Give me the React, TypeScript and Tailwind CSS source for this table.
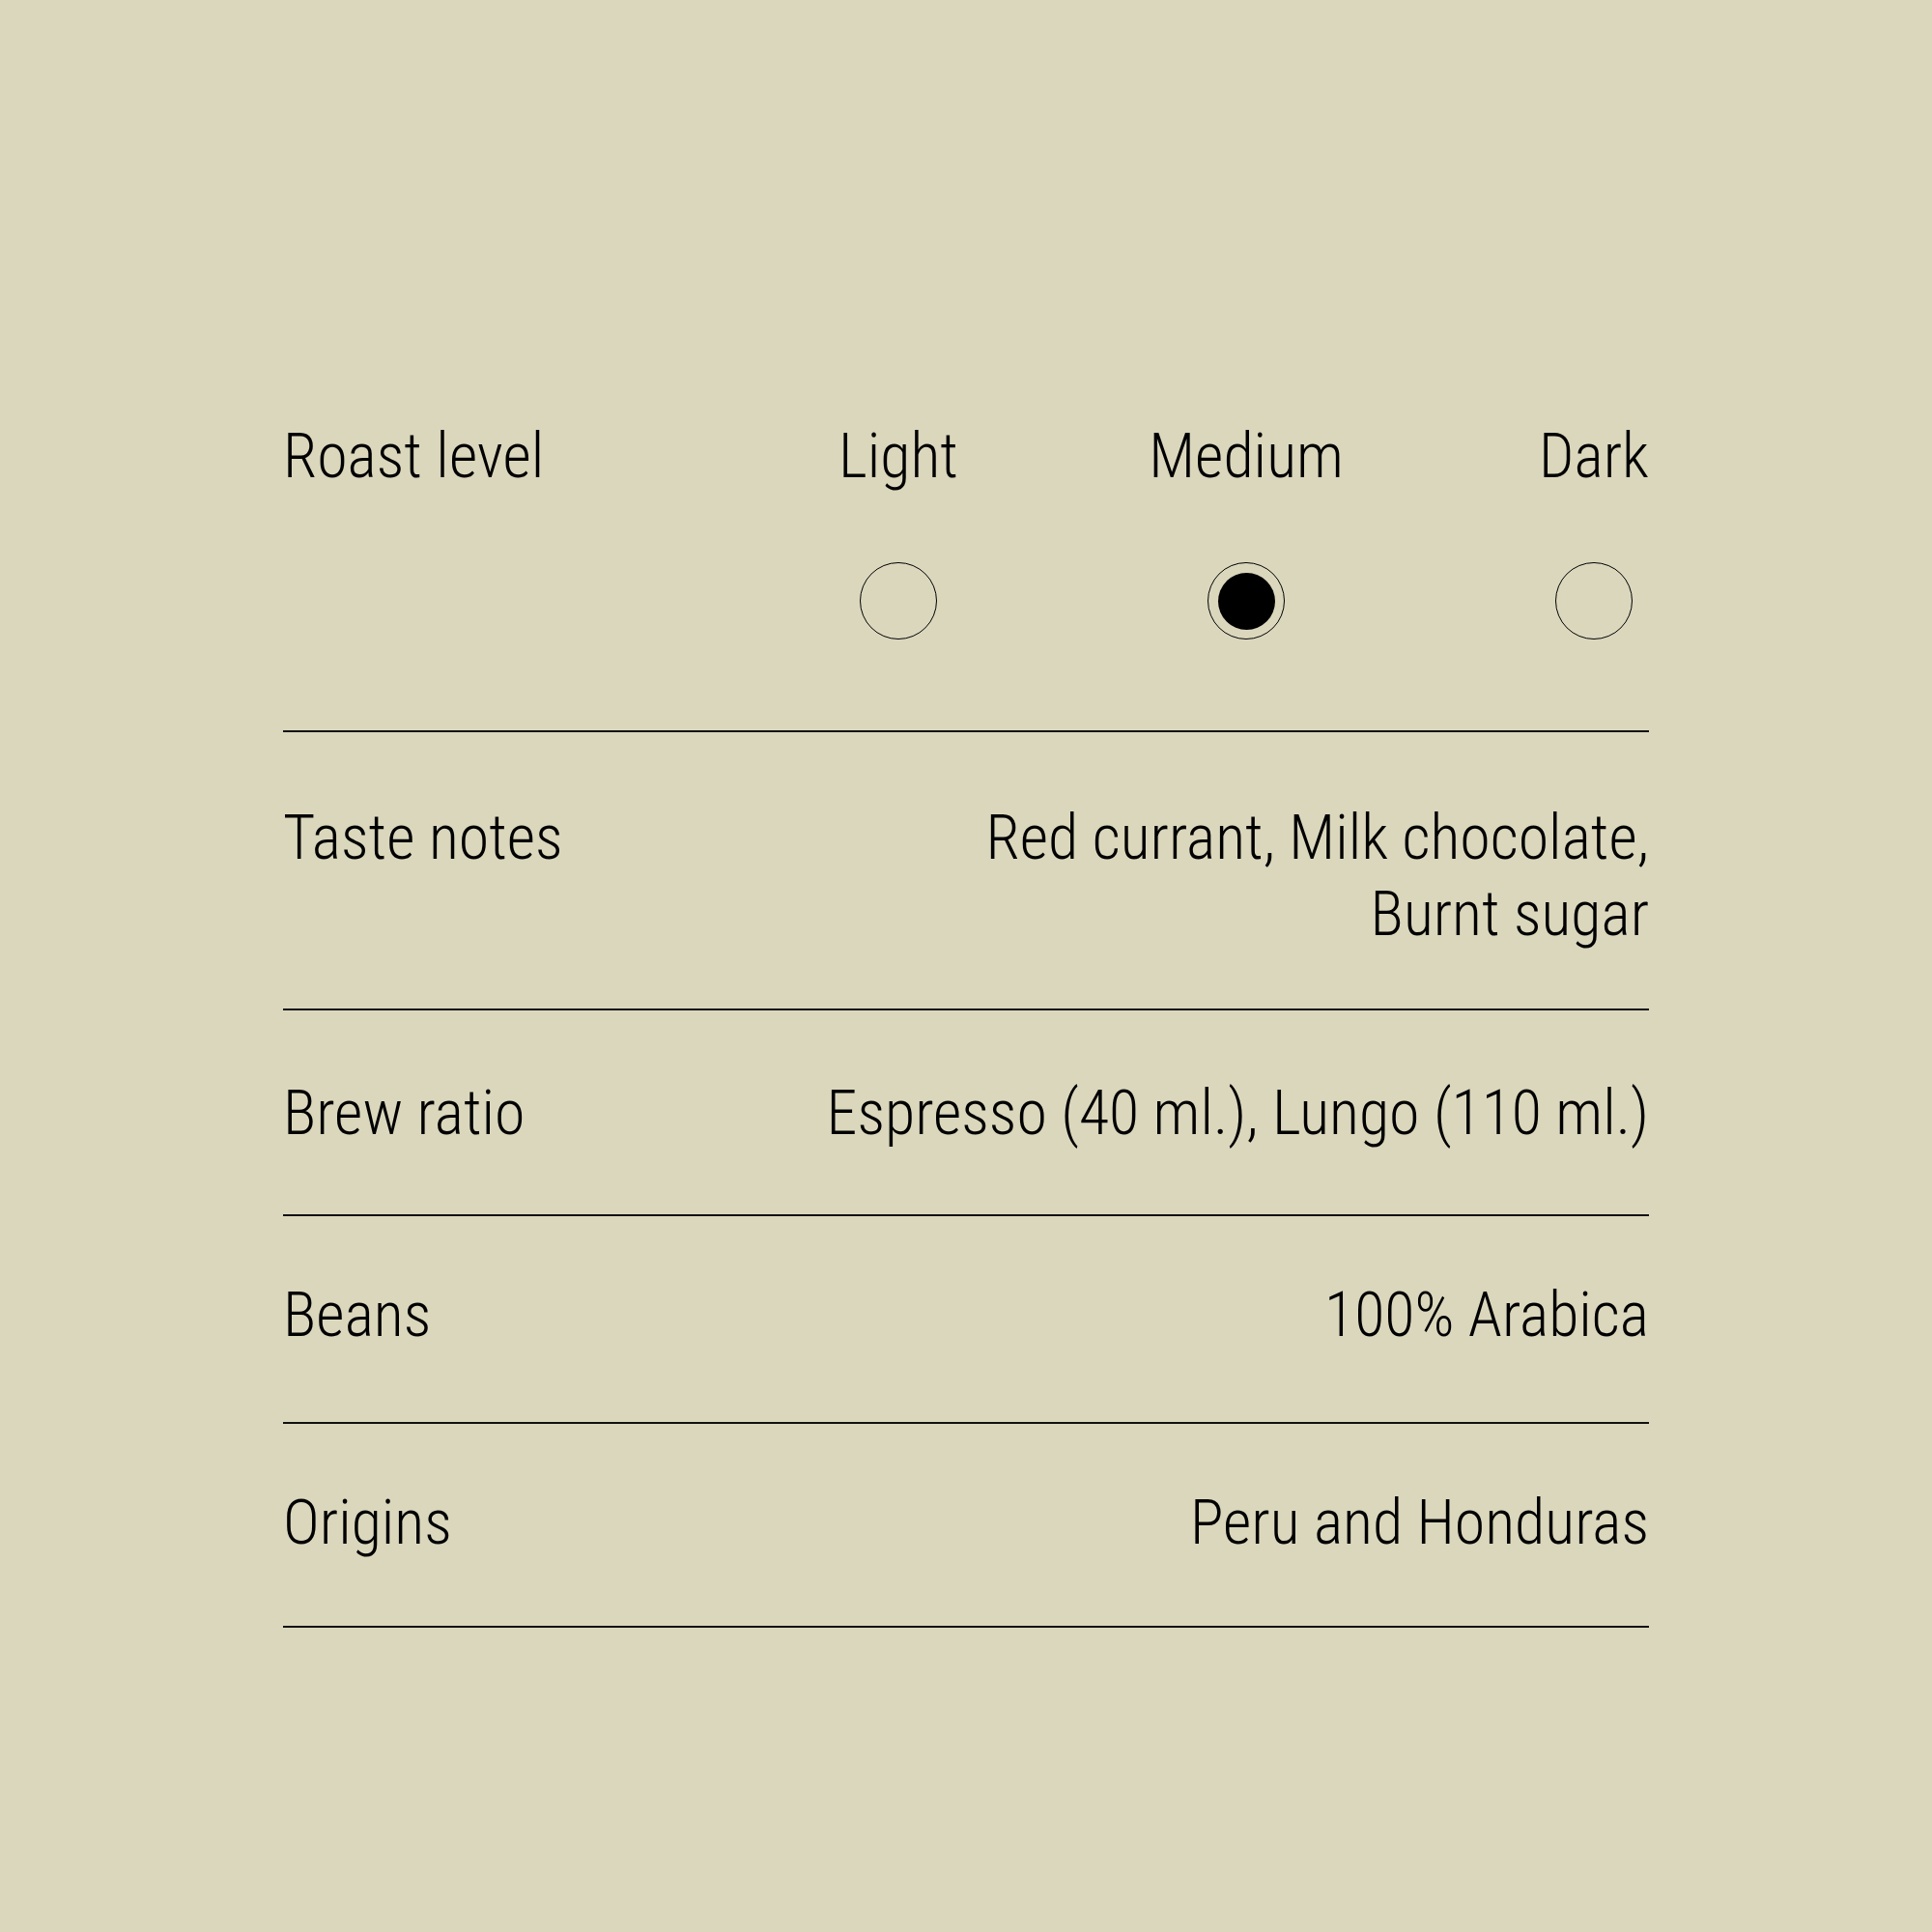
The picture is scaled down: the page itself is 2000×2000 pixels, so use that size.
const font = { fontFamily: '"Roboto Condensed", "Open Sans", sans-serif' };

const levels = [
  { name: 'Light', selected: false },
  { name: 'Medium', selected: true },
  { name: 'Dark', selected: false },
];

function Radio({ selected }: { selected: boolean }) {
  return (
    <div className="mt-[70px] flex h-[80px] w-[80px] shrink-0 items-center justify-center rounded-full border border-black">
      {selected && <div className="h-[59px] w-[59px] rounded-full bg-black" />}
    </div>
  );
}

function Row({ label, className, children }: { label: string; className: string; children: React.ReactNode }) {
  return (
    <div className={`flex items-start justify-between border-b-2 border-[#111] ${className}`}>
      <span>{label}</span>
      <div className="text-right">{children}</div>
    </div>
  );
}

export default function App() {
  return (
    <div className="min-h-screen w-full bg-[#dbd7bd] text-black" style={font}>
      <div className="mx-auto w-[1414px] pt-[433px] text-[64px] leading-[79px] font-light font-stretch-condensed">
        {/* roast level picker */}
        <div className="flex items-start justify-between border-b-2 border-[#111] pb-[94px]">
          <span>Roast level</span>
          <div className="flex gap-[246px]">
            {levels.map((l) => (
              <div key={l.name} className="flex w-[114px] flex-col items-center">
                <span className="whitespace-nowrap">{l.name}</span>
                <Radio selected={l.selected} />
              </div>
            ))}
          </div>
        </div>

        <Row label="Taste notes" className="pt-[70px] pb-[58px]">
          Red currant, Milk chocolate,
          <br />
          Burnt sugar
        </Row>
        <Row label="Brew ratio" className="pt-[67px] pb-[65px]">
          Espresso (40 ml.), Lungo (110 ml.)
        </Row>
        <Row label="Beans" className="pt-[63px] pb-[71px]">
          100% Arabica
        </Row>
        <Row label="Origins" className="pt-[63px] pb-[67px]">
          Peru and Honduras
        </Row>
      </div>
    </div>
  );
}
